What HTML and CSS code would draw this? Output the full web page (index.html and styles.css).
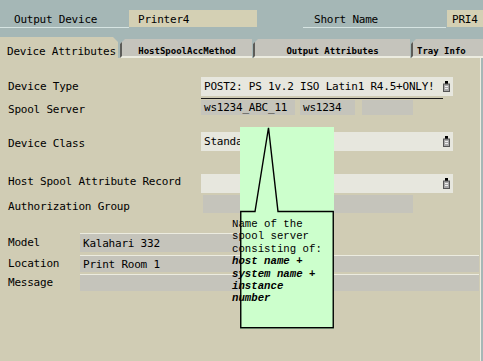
FILE: index.html
```html
<!DOCTYPE html>
<html>
<head>
<meta charset="utf-8">
<link rel="stylesheet" href="styles.css">
</head>
<body>
<div class="screen">
  <div class="header">
    <div class="hlabel hl1">Output Device</div>
    <div class="hfield hf1">Printer4</div>
    <div class="hlabel hl2">Short Name</div>
    <div class="hfield hf2">PRI4</div>
  </div>
  <div class="tabs">
    <div class="tab active">Device Attributes</div>
    <div class="tab t1">HostSpoolAccMethod</div>
    <div class="tab t2">Output Attributes</div>
    <div class="tab t3">Tray Info</div>
  </div>
  <div class="content">
    <div class="row r1">
      <div class="lbl">Device Type</div>
      <div class="combo-wrap">
        <div class="field light combo">POST2: PS 1v.2 ISO Latin1 R4.5+ONLY!<svg class="dd" width="7" height="11" viewBox="0 0 7 11"><rect x="2" y="0" width="3" height="3" fill="#000"/><rect x="0.5" y="3" width="6" height="7.5" fill="#a8a8a8" stroke="#555" stroke-width="1"/><line x1="2" y1="5.5" x2="5" y2="5.5" stroke="#eee"/><line x1="2" y1="7.5" x2="5" y2="7.5" stroke="#eee"/></svg></div>
        <div class="uline"></div>
      </div>
    </div>
    <div class="row r2">
      <div class="lbl">Spool Server</div>
      <div class="field gray s1">ws1234_ABC_11</div>
      <div class="field gray s2">ws1234</div>
      <div class="field gray s3"></div>
    </div>
    <div class="row r3">
      <div class="lbl">Device Class</div>
      <div class="field light combo">Standard<svg class="dd" width="7" height="11" viewBox="0 0 7 11"><rect x="2" y="0" width="3" height="3" fill="#000"/><rect x="0.5" y="3" width="6" height="7.5" fill="#a8a8a8" stroke="#555" stroke-width="1"/><line x1="2" y1="5.5" x2="5" y2="5.5" stroke="#eee"/><line x1="2" y1="7.5" x2="5" y2="7.5" stroke="#eee"/></svg></div>
    </div>
    <div class="row r4">
      <div class="lbl">Host Spool Attribute Record</div>
      <div class="field light combo"><svg class="dd" width="7" height="11" viewBox="0 0 7 11"><rect x="2" y="0" width="3" height="3" fill="#000"/><rect x="0.5" y="3" width="6" height="7.5" fill="#a8a8a8" stroke="#555" stroke-width="1"/><line x1="2" y1="5.5" x2="5" y2="5.5" stroke="#eee"/><line x1="2" y1="7.5" x2="5" y2="7.5" stroke="#eee"/></svg></div>
    </div>
    <div class="row r5">
      <div class="lbl">Authorization Group</div>
      <div class="field gray auth"></div>
    </div>
    <div class="row r6">
      <div class="lbl short">Model</div>
      <div class="field gray model">Kalahari 332</div>
    </div>
    <div class="row r7">
      <div class="lbl short">Location</div>
      <div class="field gray wide">Print Room 1</div>
    </div>
    <div class="row r8">
      <div class="lbl short">Message</div>
      <div class="field gray wide"></div>
    </div>

    <div class="tooltip">
      <svg class="balloon" width="94" height="202" viewBox="0 0 94 202">
        <path d="M0.75,84.5 H15 L28.5,0.75 L38,84.5 H93.25 V200.75 H0.75 Z" fill="none" stroke="#000" stroke-width="1.4"/>
      </svg>
      <div class="tiptext">
        <div>Name of the</div>
        <div>spool server</div>
        <div>consisting of:</div>
        <div class="em">host name +</div>
        <div class="em">system name +</div>
        <div class="em">instance</div>
        <div class="em">number</div>
      </div>
    </div>
  </div>
</div>
</body>
</html>
```

FILE: styles.css
```css
html, body {
  margin: 0;
  padding: 0;
}
body {
  width: 483px;
  height: 361px;
  overflow: hidden;
  background: #d0ccb4;
  font-family: "DejaVu Sans Mono", "Liberation Mono", monospace;
  font-size: 11px;
  letter-spacing: -0.22px;
  color: #000;
}
.screen {
  width: 483px;
  height: 361px;
  display: flex;
  flex-direction: column;
  background: #a5b7b6;
}
.header {
  height: 37px;
  display: flex;
  align-items: flex-start;
  padding-top: 10px;
  box-sizing: border-box;
}
.hlabel {
  height: 17px;
  line-height: 20px;
  border-bottom: 1px solid #d6e4e2;
  box-sizing: content-box;
}
.hl1 {
  width: 115px;
  padding-left: 14px;
}
.hl2 {
  width: 132px;
  padding-left: 11px;
  margin-left: 46px;
}
.hfield {
  height: 17px;
  line-height: 19px;
  background: #d4d0b4;
}
.hf1 {
  width: 119px;
  padding-left: 9px;
}
.hf2 {
  width: 31px;
  padding-left: 5px;
  margin-left: 1px;
}
.tabs {
  height: 21px;
  display: flex;
  align-items: flex-end;
}
.tab {
  box-sizing: border-box;
}
.tab.active {
  width: 118px;
  height: 21px;
  background: #d0ccb4;
  padding-left: 7px;
  line-height: 30px;
  clip-path: polygon(0 0, 113px 0, 118px 5px, 118px 100%, 0 100%);
}
.tab.t1, .tab.t2, .tab.t3 {
  height: 19px;
  background: #c5c4bc;
  border-left: 2px solid #5c5c58;
  border-bottom: 2px solid #ecece0;
  font-size: 9px;
  font-weight: bold;
  letter-spacing: 0;
  line-height: 25px;
  clip-path: polygon(0 5px, 5px 0, 100% 0, 100% 100%, 0 100%);
}
.tab.t1 {
  width: 132px;
  margin-left: 2px;
  text-align: center;
}
.tab.t2 {
  width: 157px;
  margin-left: 1px;
  text-align: center;
}
.tab.t3 {
  width: 72px;
  margin-left: 1px;
  padding-left: 4px;
}
.content {
  flex: 1;
  position: relative;
  background: #d0ccb4;
  border-right: 1px solid #ecece0;
  margin-right: 2px;
  display: flex;
  flex-direction: column;
}
.row {
  display: flex;
  align-items: center;
}
.lbl {
  width: 193px;
  padding-left: 8px;
  flex: none;
}
.lbl.short {
  width: 72px;
}
.field {
  height: 100%;
  box-sizing: border-box;
  padding-left: 3px;
  display: flex;
  align-items: center;
  white-space: nowrap;
  overflow: hidden;
}
.field.light {
  background: #e7e7de;
}
.field.gray {
  background: #c5c4bb;
}
.combo {
  width: 252px;
  position: relative;
}
.dd {
  margin-left: auto;
  margin-right: 3px;
  flex: none;
}
.combo-wrap {
  display: flex;
  flex-direction: column;
  height: 100%;
}
.combo-wrap .combo {
  height: 19px;
}
.uline {
  margin-top: 2px;
  width: 242px;
  height: 1px;
  background: #1a1a1a;
}
.r1 { margin-top: 19px; height: 22px; align-items: flex-start; }
.r1 .lbl { line-height: 20px; }
.r2 { margin-top: 1px; height: 15px; }
.r2 .lbl { padding-top: 3px; }
.r3 { margin-top: 17px; height: 19px; }
.r3 .lbl { padding-top: 4px; }
.r4 { margin-top: 23px; height: 19px; }
.r4 .lbl { padding-bottom: 4px; }
.r5 { margin-top: 2px; height: 18px; }
.r5 .lbl { padding-top: 4px; }
.r6 { margin-top: 20px; height: 19px; }
.r7 { margin-top: 3px; height: 17px; }
.r8 { margin-top: 2px; height: 17px; }
.s1 { width: 94px; }
.s2 { width: 55px; margin-left: 5px; }
.s3 { width: 51px; margin-left: 7px; }
.auth { width: 210px; margin-left: 2px; }
.model { width: 200px; border-top: 1px solid #ecece0; }
.wide { width: 399px; border-top: 1px solid #ecece0; }
.tooltip {
  position: absolute;
  left: 240px;
  top: 69px;
  width: 94px;
  height: 202px;
  background: #ccffcc;
}
.balloon {
  position: absolute;
  left: 0;
  top: 0;
}
.tiptext {
  position: absolute;
  left: -8px;
  top: 91px;
  font-family: "Liberation Mono", "DejaVu Sans Mono", monospace;
  font-size: 10.7px;
  letter-spacing: 0;
  line-height: 12.4px;
  white-space: nowrap;
}
.tiptext .em {
  font-weight: bold;
  font-style: italic;
}
```
